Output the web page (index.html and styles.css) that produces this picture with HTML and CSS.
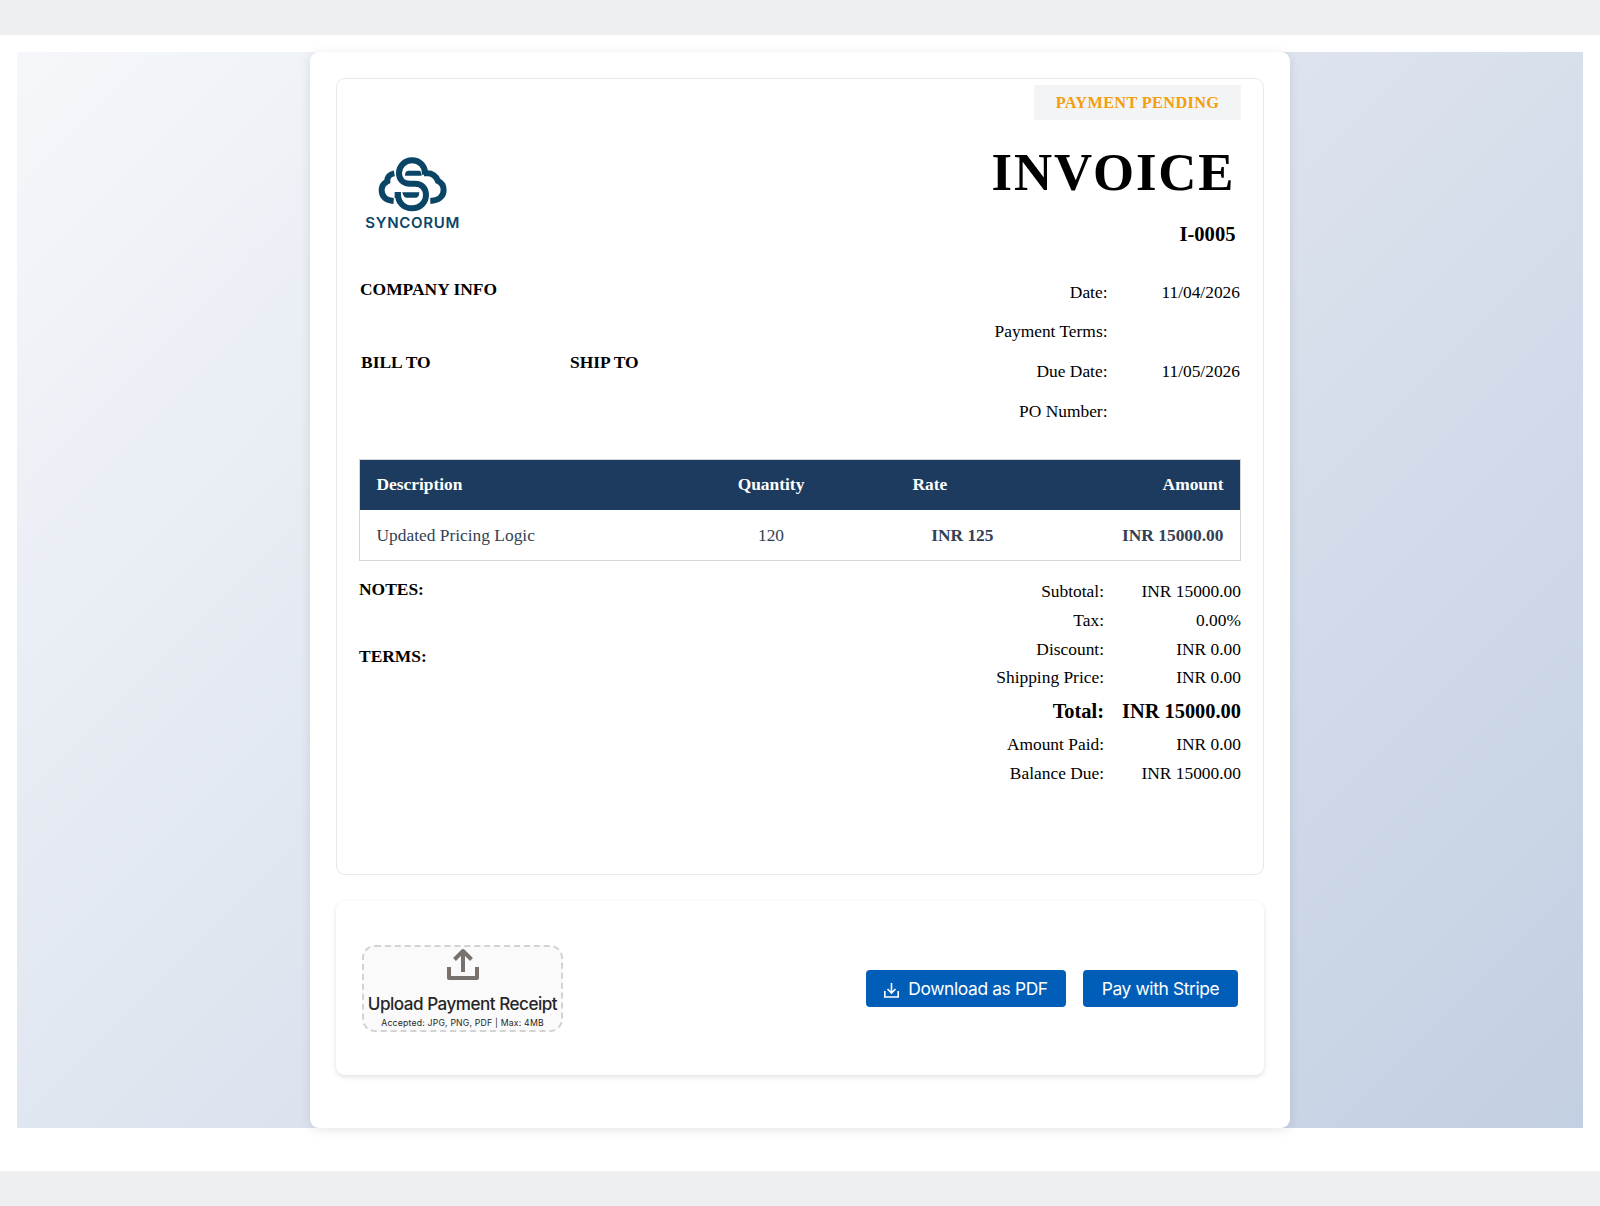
FILE: index.html
```html
<!DOCTYPE html>
<html lang="en">
<head>
    <meta charset="UTF-8">
    <title>Invoice I-0005</title>
    <link rel="stylesheet" href="styles.css">
</head>

<body>
  <div class="page">
  <div class="backdrop">
  <div class="container">

    <div class="invoice">
        <div class="status">PAYMENT PENDING</div>

        <div class="invoice-head">
            <svg class="logo" viewBox="45 45 286 225" fill="none" stroke="#0b4566" stroke-width="18">
                <path d="M225 104V99C225 77 208 61 186 61S147 78 147 99C147 119 160 131 180 131H196C215 131 228 145 228 165C228 188 210 205 186 205C162 205 145 189 144 165H134"/>
                <path d="M222 100H232C248 100 257 106 264 123C277 129 281 139 281 150C281 171 264 182 241 183"/>
                <path d="M133 100C120 102 111 111 112 124C100 130 95 140 95 151C95 171 109 182 131 183"/>
                <path d="M174 92H208Q215 93 215 107H165Q165 93 174 92Z" fill="#0b4566" stroke="none"/>
                <path d="M157 157H208Q208 171 199 173H168Q160 171 157 157Z" fill="#0b4566" stroke="none"/>
                <text class="logo-text" x="46" y="264" textLength="284" lengthAdjust="spacingAndGlyphs">SYNCORUM</text>
            </svg>
            <div class="title">
                <h1>INVOICE</h1>
                <div class="number">I-0005</div>
            </div>
        </div>

        <div class="info">
            <div class="parties">
                <h4>COMPANY INFO</h4>
                <div class="addresses">
                    <h4>BILL TO</h4>
                    <h4>SHIP TO</h4>
                </div>
            </div>
            <div class="dates">
                <span>Date:</span><span>11/04/2026</span>
                <span>Payment Terms:</span><span></span>
                <span>Due Date:</span><span>11/05/2026</span>
                <span>PO Number:</span><span></span>
            </div>
        </div>

        <table class="items">
            <colgroup>
                <col class="col-desc"><col class="col-qty"><col class="col-rate"><col>
            </colgroup>
            <thead>
                <tr>
                    <th>Description</th>
                    <th class="center">Quantity</th>
                    <th>Rate</th>
                    <th class="right">Amount</th>
                </tr>
            </thead>
            <tbody>
                <tr>
                    <td>Updated Pricing Logic</td>
                    <td class="center">120</td>
                    <td class="right bold">INR 125</td>
                    <td class="right bold">INR 15000.00</td>
                </tr>
            </tbody>
        </table>

        <div class="summary">
            <div class="notes">
                <h4>NOTES:</h4>
                <h4>TERMS:</h4>
            </div>
            <div class="totals">
                <div class="row"><span>Subtotal:</span><span>INR 15000.00</span></div>
                <div class="row"><span>Tax:</span><span>0.00%</span></div>
                <div class="row"><span>Discount:</span><span>INR 0.00</span></div>
                <div class="row"><span>Shipping Price:</span><span>INR 0.00</span></div>
                <div class="row total"><span>Total:</span><span>INR 15000.00</span></div>
                <div class="row"><span>Amount Paid:</span><span>INR 0.00</span></div>
                <div class="row"><span>Balance Due:</span><span>INR 15000.00</span></div>
            </div>
        </div>
    </div>

    <div class="actions">
        <label class="upload">
            <svg class="upload-icon" viewBox="0 0 34 34" fill="none" stroke="#78716c" stroke-width="4" stroke-linejoin="round">
                <path d="M17 25V4M8.5 12.5L17 4L25.5 12.5"/>
                <path d="M3 20V31H31V20"/>
            </svg>
            <span class="upload-title">Upload Payment Receipt</span>
            <span class="upload-hint">Accepted: JPG, PNG, PDF | Max: 4MB</span>
        </label>
        <div class="buttons">
            <button class="btn btn-download">
                <svg class="download-icon" viewBox="0 0 15 15" fill="none" stroke="#fff" stroke-width="1.6">
                    <path d="M7.5 0V9.5M3.5 6L7.5 10L11.5 6M.8 8V14H14.2V8"/>
                </svg>
                <span>Download as PDF</span>
            </button>
            <button class="btn btn-stripe"><span>Pay with Stripe</span></button>
        </div>
    </div>

  </div>
  </div>
  </div>
</body>

</html>
```
FILE: styles.css
```css
* {
  box-sizing: border-box;
}

body {
  margin: 0;
  padding: 35px 0;
  height: 1206px;
  background: #edeff1;
  font-family: "Liberation Serif", "Times New Roman", serif;
  font-size: 17.4px;
  color: #000;
}

h1,
h4 {
  margin: 0;
}

h4 {
  font-size: 17.45px;
  line-height: 20px;
}

.page {
  height: 1136px;
  padding: 17px 17.4px 0;
  background: #fff;
}

.backdrop {
  height: 1075.5px;
  background: linear-gradient(135deg, #f5f7fa 0%, #c3cfe2 100%);
}

.container {
  width: 980px;
  height: 1075.5px;
  margin: 0 auto;
  padding: 26px;
  background: #fff;
  border-radius: 9px;
  box-shadow: 0 2px 11px rgba(0, 0, 0, .1);
}

.invoice {
  height: 797px;
  padding: 6px 22px 0;
  border: 1.5px solid #e8e9ed;
  border-radius: 9px;
}

.status {
  width: 207px;
  height: 35px;
  margin-left: auto;
  background: #f3f4f6;
  color: #f59e0b;
  font-size: 16.3px;
  font-weight: bold;
  line-height: 35px;
  letter-spacing: .35px;
  text-align: center;
}

.invoice-head {
  display: flex;
  justify-content: space-between;
  height: 152.5px;
  padding: 22px 5.5px 0 5.5px;
}

.logo {
  width: 95.3px;
  height: 75px;
  margin-top: 13px;
}

.logo-text {
  font-family: Inter, sans-serif;
  font-size: 43px;
  font-weight: 600;
  letter-spacing: 2px;
  fill: #0b4566;
  stroke: none;
}

.title {
  text-align: right;
}

h1 {
  font-size: 52.8px;
  line-height: 60px;
  letter-spacing: 1.9px;
}

.number {
  margin-top: 20px;
  font-size: 20.6px;
  font-weight: bold;
  line-height: 24px;
}

.info {
  display: flex;
  justify-content: space-between;
  padding: 0 1px;
}

.parties {
  padding-top: 6px;
}

.addresses {
  display: grid;
  grid-template-columns: 209px 200px;
  margin: 53px 0 0 1px;
}

.dates {
  display: grid;
  grid-template-columns: 160px 132.5px;
  grid-auto-rows: 39.7px;
  line-height: 39.7px;
  text-align: right;
}

.items {
  width: 100%;
  margin-top: 27.5px;
  border: 1px solid #d3d5d8;
  border-spacing: 0;
  table-layout: fixed;
}

.col-desc {
  width: 286px;
}

.col-qty {
  width: 250px;
}

.col-rate {
  width: 114px;
}

.items th,
.items td {
  height: 50px;
  padding: 0 16.5px;
  text-align: left;
}

.items th {
  padding-bottom: 1px;
  background: #1c3b5e;
  color: #fff;
}

.items td {
  padding-top: 1px;
  color: #334155;
}

.items .center {
  text-align: center;
}

.items .right {
  text-align: right;
}

.items .bold {
  font-weight: bold;
}

.summary {
  display: flex;
  justify-content: space-between;
  padding-top: 16px;
}

.notes {
  display: flex;
  flex-direction: column;
  gap: 47px;
  padding-top: 2px;
}

.row {
  display: grid;
  grid-template-columns: 160px 137px;
  line-height: 28.9px;
  text-align: right;
}

.total {
  padding-top: 1px;
  font-size: 20.4px;
  font-weight: bold;
  line-height: 37px;
}

.actions {
  display: flex;
  justify-content: space-between;
  align-items: center;
  height: 174px;
  margin-top: 26px;
  padding: 0 26px;
  border-radius: 9px;
  box-shadow: 0 2px 5px rgba(0, 0, 0, .12);
  font-family: Inter, sans-serif;
}

.upload {
  display: flex;
  flex-direction: column;
  align-items: center;
  width: 201px;
  height: 87px;
  border: 2px dashed #d3d3d3;
  border-radius: 13px;
  background: #fafafa;
  color: #262626;
  white-space: nowrap;
}

.upload-icon {
  width: 34px;
  height: 34px;
}

.upload-title {
  margin-top: 11px;
  font-size: 17.1px;
  font-weight: 500;
  line-height: 24px;
  letter-spacing: -.5px;
}

.upload-hint {
  margin-top: 1px;
  font-size: 8.7px;
  line-height: 12px;
  letter-spacing: .19px;
}

.buttons {
  display: flex;
  gap: 17px;
}

.btn {
  display: flex;
  align-items: center;
  justify-content: center;
  height: 37px;
  padding: 0;
  border: 0;
  border-radius: 4px;
  background: #005eb8;
  color: #fff;
  font-family: Inter, sans-serif;
  font-size: 17.4px;
  letter-spacing: -.37px;
  cursor: pointer;
}

.btn-download {
  gap: 9px;
  width: 200px;
}

.btn-stripe {
  width: 155px;
}

.download-icon {
  width: 15px;
  height: 15px;
  margin-top: 4px;
}
```
